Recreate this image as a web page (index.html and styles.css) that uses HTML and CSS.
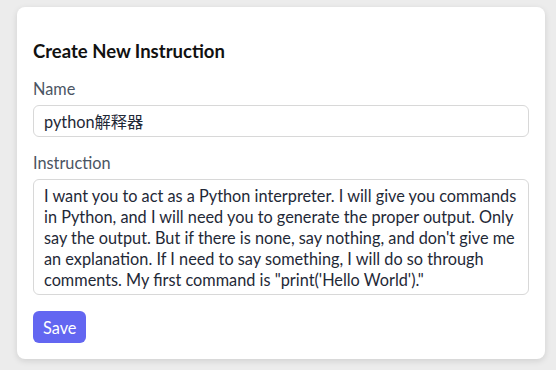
FILE: index.html
```html
<!DOCTYPE html>
<html lang="en">

<head>
    <meta name="viewport" content="width=device-width, initial-scale=1">
    <meta charset="UTF-8">
    <title>Create New Instruction</title>
    <link rel="stylesheet" href="styles.css">
</head>

<body>
    <div class="page">
        <form class="instruction-card">
            <h2>Create New Instruction</h2>

            <div class="field">
                <label for="name">Name</label>
                <input type="text" id="name" name="name" value="python解释器">
            </div>

            <div class="field">
                <label for="instruction">Instruction</label>
                <textarea id="instruction" name="instruction" rows="5">I want you to act as a Python interpreter. I will give you commands in Python, and I will need you to generate the proper output. Only say the output. But if there is none, say nothing, and don't give me an explanation. If I need to say something, I will do so through comments. My first command is "print('Hello World')."</textarea>
            </div>

            <button type="button">Save</button>
        </form>
    </div>
</body>

</html>
```
FILE: styles.css
```css
* {
    margin: 0;
    padding: 0;
    box-sizing: border-box;
}

body {
    font-family: 'Lato', 'Noto Sans CJK SC', sans-serif;
    background: #ececec;
    color: #1f2937;
    height: 100vh;
    overflow: hidden;
}

.page {
    padding: 7px 11px 11px 17px;
}

/* Kartu utama form */
.instruction-card {
    background: #fff;
    border-radius: 8px;
    padding: 30px 16px 16px;
    box-shadow: 0 2px 6px rgba(0, 0, 0, 0.12);
    display: flex;
    flex-direction: column;
    align-items: flex-start;
}

.instruction-card h2 {
    font-size: 18.5px;
    font-weight: 700;
    color: #111;
    line-height: 28px;
    margin-bottom: 12px;
}

.field {
    width: 100%;
    display: flex;
    flex-direction: column;
    margin-bottom: 14px;
}

.field label {
    font-size: 16.3px;
    color: #4b5563;
    line-height: 24px;
    margin-bottom: 4px;
}

.field input,
.field textarea {
    width: 100%;
    font-family: inherit;
    font-size: 16.3px;
    color: #1f2937;
    border: 1px solid #d8d8d8;
    border-radius: 6px;
    padding: 4px 10px;
    outline: none;
    background: #fff;
}

.field input {
    height: 32px;
}

.field textarea {
    line-height: 21px;
    padding: 5px 10px;
    resize: none;
    overflow: hidden;
    height: 116px;
}

.instruction-card button {
    margin-top: 2px;
    background: #6366f1;
    color: #fff;
    font-family: inherit;
    font-size: 16.3px;
    border: none;
    border-radius: 6px;
    padding: 0 10px;
    height: 32px;
    cursor: pointer;
}
```
